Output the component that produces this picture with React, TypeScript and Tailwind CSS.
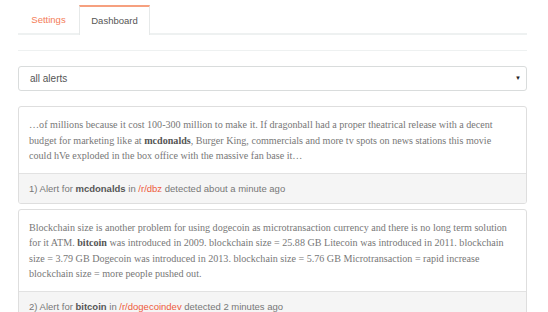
import React from 'react';

const sans = { fontFamily: '"Liberation Sans", Arial, sans-serif' };

const B = ({ children }: { children: React.ReactNode }) => <b className="text-[#555]">{children}</b>;

const alerts = [
  {
    id: 1,
    lines: [
      <>…of millions because it cost 100-300 million to make it. If dragonball had a proper theatrical release with a decent</>,
      <>budget for marketing like at <B>mcdonalds</B>, Burger King, commercials and more tv spots on news stations this movie</>,
      <>could hVe exploded in the box office with the massive fan base it…</>,
    ],
    keyword: 'mcdonalds',
    sub: '/r/dbz',
    when: 'about a minute ago',
  },
  {
    id: 2,
    lines: [
      <>Blockchain size is another problem for using dogecoin as microtransaction currency and there is no long term solution</>,
      <>for it ATM. <B>bitcoin</B> was introduced in 2009. blockchain size = 25.88 GB Litecoin was introduced in 2011. blockchain</>,
      <>size = 3.79 GB Dogecoin was introduced in 2013. blockchain size = 5.76 GB Microtransaction = rapid increase</>,
      <>blockchain size = more people pushed out.</>,
    ],
    keyword: 'bitcoin',
    sub: '/r/dogecoindev',
    when: '2 minutes ago',
  },
];

export default function App() {
  return (
    <div className="w-[548px] h-[312px] overflow-hidden bg-white" style={sans}>
      <div className="ml-[18px] w-[509px] pt-[5px]">
        {/* tabs */}
        <div className="flex h-[30px] border-b-[2px] border-[#eef1f1]">
          <div className="w-[61px] pt-[2px] flex items-center justify-center text-[9.5px] text-[#f47d57]">Settings</div>
          <div className="w-[71px] -mb-[2px] pt-[1px] flex items-center justify-center bg-white border-t-[2px] border-t-[#f6a07f] border-x border-x-[#e6e9e9] text-[9.5px] text-[#555]">
            Dashboard
          </div>
        </div>
        <div className="mt-[15px] border-t border-[#eef1f1]" />

        {/* filter */}
        <div className="mt-[15px] h-[25px] flex items-center justify-between border border-[#d9dcdc] rounded-[3px] pl-[11px] pr-[5px] text-[10px] text-[#555]">
          <span>all alerts</span>
          <span className="text-[6px] text-[#222]">▼</span>
        </div>

        {/* alerts */}
        <div className="mt-[15px] flex flex-col gap-[5px]">
          {alerts.map((a) => (
            <div key={a.id} className="border border-[#dedede] rounded-[3px] overflow-hidden">
              <div
                className="px-[10px] pt-[10px] pb-[9px] text-[10.1px] leading-[15.5px] text-[#777]"
                style={{ fontFamily: '"Liberation Serif", Georgia, serif' }}
              >
                {a.lines.map((l, i) => (
                  <div key={i} className="whitespace-nowrap">{l}</div>
                ))}
              </div>
              <div className="h-[30px] flex items-center pt-[2px] px-[10px] bg-[#f5f5f5] border-t border-[#e2e2e2] text-[9.5px] text-[#777]">
                <span>
                  {a.id}) Alert for <b className="text-[#555]">{a.keyword}</b> in{' '}
                  <span className="text-[#ee5a3c]">{a.sub}</span> detected {a.when}
                </span>
              </div>
            </div>
          ))}
        </div>
      </div>
    </div>
  );
}
